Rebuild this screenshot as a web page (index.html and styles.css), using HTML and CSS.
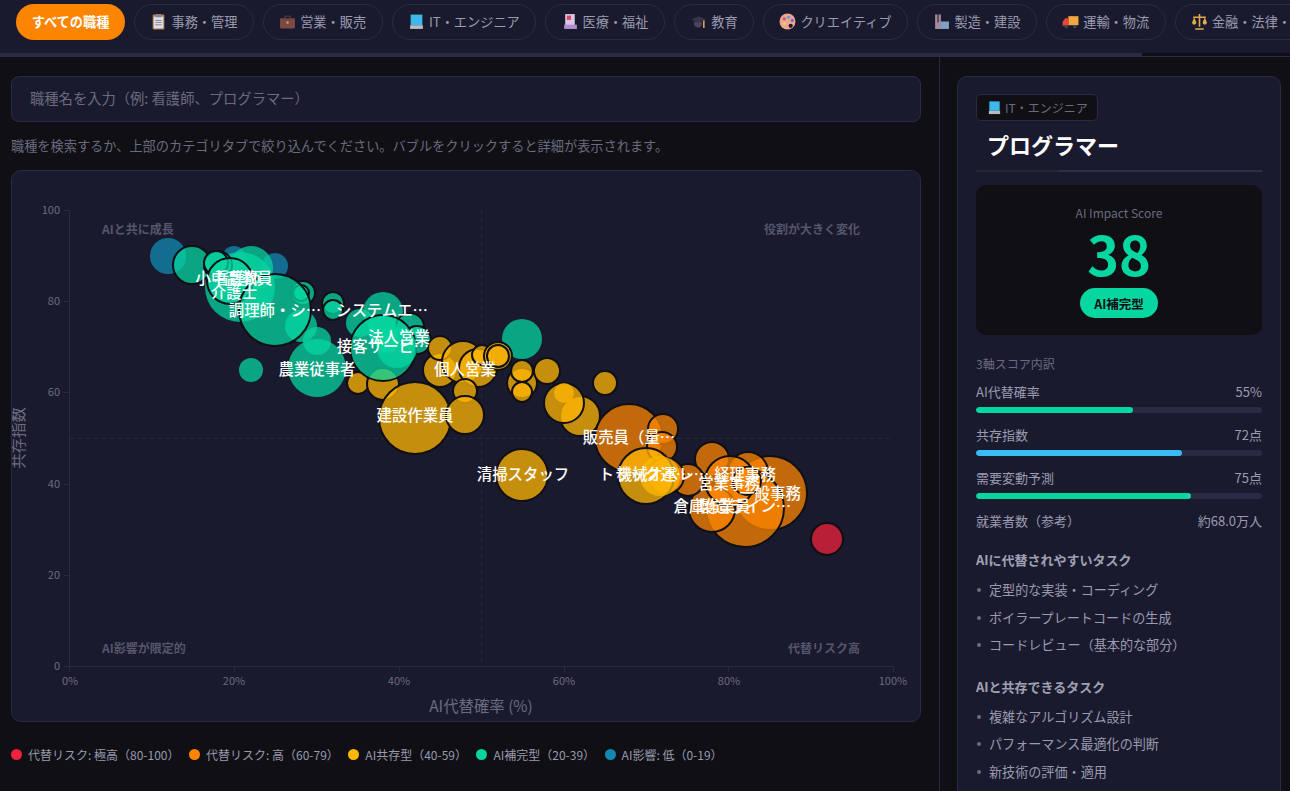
FILE: index.html
```html
<!DOCTYPE html>
<html lang="ja">
<head>
<meta charset="utf-8">
<title>AI Impact</title>
<link rel="stylesheet" href="styles.css">
</head>
<body>
<nav class="tabs">
  <div class="tab tab-active">すべての職種</div>
  <div class="tab"><svg class="ico" viewBox="0 0 16 16"><rect x="2.500" y="1.500" width="11" height="14" rx="1" fill="#b87f4c"/><rect x="3.500" y="3.500" width="9" height="11" fill="#dcdde6"/><rect x="5.500" y="1" width="5" height="3" fill="#858594"/><path d="M5 7h6M5 9h6M5 11h6" stroke="#8d8d9c" stroke-width="1"/></svg>事務・管理</div>
  <div class="tab"><svg class="ico" viewBox="0 0 16 16"><rect x="1" y="5" width="14" height="9.500" rx="1" fill="#7c4a42"/><rect x="5.500" y="3" width="5" height="2.500" fill="none" stroke="#5f3a36"/><rect x="7" y="8" width="2" height="2" fill="#d89f76"/></svg>営業・販売</div>
  <div class="tab"><svg class="ico" viewBox="0 0 16 16"><rect x="2.500" y="1.500" width="11" height="10" fill="#3db8ea"/><rect x="2" y="11.500" width="12" height="3.500" fill="#b5bac4"/></svg>IT・エンジニア</div>
  <div class="tab"><svg class="ico" viewBox="0 0 16 16"><rect x="3" y="1" width="9" height="13.500" fill="#d9c5e6"/><rect x="4.500" y="2.500" width="4" height="4" fill="#d9466a"/><rect x="2" y="11" width="12" height="4" fill="#b38cd0"/></svg>医療・福祉</div>
  <div class="tab"><svg class="ico" viewBox="0 0 16 16"><path d="M1 6l7-3 7 3-7 3z" fill="#3b3548"/><path d="M4 8v4l4 2 3-2V8l-3 1z" fill="#4d4560"/><path d="M13 7v7" stroke="#f0a860" stroke-width="1.400"/></svg>教育</div>
  <div class="tab"><svg class="ico" viewBox="0 0 16 16"><circle cx="8" cy="8" r="7.500" fill="#eea68f"/><circle cx="5" cy="5.500" r="1.500" fill="#e04a6f"/><circle cx="9" cy="4" r="1.500" fill="#4aa8e0"/><circle cx="12.500" cy="7" r="1.500" fill="#8a5fd0"/><circle cx="5" cy="10" r="1.500" fill="#e8d060"/><circle cx="11" cy="12" r="2" fill="#1a1a2e"/></svg>クリエイティブ</div>
  <div class="tab"><svg class="ico" viewBox="0 0 16 16"><path d="M2 15V1.500h2.200V9h1V1.500h2.200V15z" fill="#a88a9a"/><rect x="7" y="8" width="8" height="7" fill="#7fa3c4"/></svg>製造・建設</div>
  <div class="tab"><svg class="ico" viewBox="0 0 16 16"><rect x="6" y="3" width="9.500" height="8.500" fill="#f2a83c"/><path d="M6 5H3L.5 8.500V12H6z" fill="#e2483f"/><circle cx="4" cy="13" r="1.600" fill="#445"/><circle cx="12" cy="13" r="1.600" fill="#445"/></svg>運輸・物流</div>
  <div class="tab"><svg class="ico" viewBox="0 0 16 16"><path d="M8 1v12M2 4h12M4 15h8" stroke="#e3a94e" stroke-width="1.500" fill="none"/><path d="M1 9l2-5 2 5a2 2 0 0 1-4 0zM11 9l2-5 2 5a2 2 0 0 1-4 0z" fill="#e3a94e"/></svg>金融・法律・公務</div>
</nav>
<div class="scrollbar"><div class="scroll-thumb"></div></div>
<main class="layout">
  <section class="left">
    <div class="search">職種名を入力（例: 看護師、プログラマー）</div>
    <p class="hint">職種を検索するか、上部のカテゴリタブで絞り込んでください。バブルをクリックすると詳細が表示されます。</p>
    <div class="chart">
      <svg class="plot" viewBox="0 0 908 550" width="908" height="550">
        <g class="grid">
          <path d="M57.500 495.500H881.500"/>
          <path d="M57.500 39.500V495.500"/>
          <path d="M52 39.500h5M52 130.500h5M52 221.500h5M52 313.500h5M52 404.500h5M52 495.500h5M57.500 496v5M222.500 496v5M387.500 496v5M552.500 496v5M716.500 496v5M881.500 496v5"/>
          <path class="mid" d="M57.500 267.500H881.500M469.500 39.500V495.500"/>
        </g>
        <g class="axis-y">
          <text x="48" y="43">100</text><text x="48" y="134">80</text><text x="48" y="225">60</text><text x="48" y="317">40</text><text x="48" y="408">20</text><text x="48" y="499">0</text>
        </g>
        <g class="axis-x">
          <text x="58" y="514">0%</text><text x="222" y="514">20%</text><text x="387" y="514">40%</text><text x="552" y="514">60%</text><text x="717" y="514">80%</text><text x="881" y="514">100%</text>
        </g>
        <text class="axis-title" x="469" y="541">AI代替確率 (%)</text>
        <text class="axis-title" transform="translate(12 267) rotate(-90)">共存指数</text>
        <g class="quad">
          <text x="90" y="63">AIと共に成長</text>
          <text x="848" y="63" class="end">役割が大きく変化</text>
          <text x="90" y="482">AI影響が限定的</text>
          <text x="848" y="482" class="end">代替リスク高</text>
        </g>
        <g class="canvas">
          <g class="bubbles blue soft">
            <circle cx="157" cy="85" r="18"/><circle cx="223" cy="87" r="12"/><circle cx="264" cy="95" r="13"/>
          </g>
          <g class="bubbles teal soft">
            <circle cx="229" cy="116" r="35"/><circle cx="240" cy="97" r="22"/><circle cx="290" cy="155" r="16"/><circle cx="306" cy="170" r="14"/><circle cx="306" cy="197" r="29"/><circle cx="240" cy="199" r="12"/><circle cx="511" cy="168" r="20"/><circle cx="372" cy="141" r="20"/><circle cx="349" cy="152" r="14"/>
          </g>
          <g class="bubbles teal">
            <circle cx="181" cy="94" r="19"/><circle cx="207" cy="94" r="14"/><circle cx="205" cy="92" r="12"/><circle cx="219" cy="110" r="23"/><circle cx="292" cy="122" r="12"/><circle cx="290" cy="122" r="8"/><circle cx="264" cy="139" r="36"/><circle cx="322" cy="132" r="11"/><circle cx="322" cy="139" r="10"/><circle cx="399" cy="156" r="14"/><circle cx="406" cy="169" r="14"/>
          </g>
          <g class="bubbles amber">
            <circle cx="347" cy="212" r="11"/><circle cx="372" cy="213" r="16"/><circle cx="404" cy="247" r="36"/><circle cx="429" cy="199" r="17"/><circle cx="429" cy="177" r="12"/><circle cx="452" cy="191" r="21"/><circle cx="467" cy="197" r="19"/><circle cx="454" cy="220" r="12"/><circle cx="454" cy="244" r="19"/><circle cx="471" cy="184" r="10"/><circle cx="487" cy="185" r="14"/><circle cx="487" cy="185" r="11"/><circle cx="511" cy="212" r="15"/><circle cx="511" cy="200" r="11"/><circle cx="511" cy="221" r="10"/><circle cx="536" cy="200" r="13"/><circle cx="594" cy="212" r="12"/><circle cx="569" cy="245" r="20"/><circle cx="553" cy="232" r="20"/><circle cx="511" cy="304" r="26"/>
          </g>
          <g class="bubbles amber soft"><circle cx="553" cy="222" r="10"/></g>
          <g class="bubbles orange">
            <circle cx="618" cy="267" r="34"/><circle cx="652" cy="258" r="15"/><circle cx="651" cy="276" r="15"/><circle cx="701" cy="288" r="17"/><circle cx="759" cy="322" r="37"/><circle cx="737" cy="301" r="20"/><circle cx="734" cy="337" r="39"/><circle cx="701" cy="338" r="23"/><circle cx="719" cy="310" r="25"/><circle cx="736" cy="310" r="14"/><circle cx="677" cy="309" r="16"/><circle cx="655" cy="305" r="18"/>
          </g>
          <g class="bubbles amber"><circle cx="635" cy="305" r="28"/></g>
          <g class="bubbles amber soft"><circle cx="649" cy="305" r="20"/></g>
          <g class="bubbles teal"><circle cx="372" cy="177" r="33"/></g>
          <g class="bubbles teal soft"><circle cx="386" cy="177" r="20"/><circle cx="376" cy="170" r="12"/><circle cx="372" cy="160" r="15"/></g>
          <g class="bubbles red"><circle cx="816" cy="368" r="16"/></g>
        </g>
        <g class="labels">
          <text x="223" y="112">小中高教員</text><text x="226" y="112">看護師</text><text x="223" y="126">介護士</text><text x="264" y="144">調理師・シ…</text><text x="371" y="144">システムエ…</text><text x="388" y="171">法人営業</text><text x="372" y="180">接客サービ…</text><text x="306" y="203">農業従事者</text><text x="454" y="203">個人営業</text><text x="404" y="249">建設作業員</text><text x="618" y="271">販売員（量…</text><text x="512" y="308">清掃スタッフ</text><text x="634" y="308">トラック運…</text><text x="652" y="308">機械オペレ…</text><text x="734" y="308">経理事務</text><text x="718" y="317">営業事務</text><text x="759" y="327">一般事務</text><text x="701" y="340">倉庫作業員</text><text x="734" y="340">製造ライン…</text>
        </g>
      </svg>
    </div>
    <ul class="legend">
      <li><i class="dot dot-red"></i>代替リスク: 極高（80-100）</li>
      <li><i class="dot dot-orange"></i>代替リスク: 高（60-79）</li>
      <li><i class="dot dot-amber"></i>AI共存型（40-59）</li>
      <li><i class="dot dot-teal"></i>AI補完型（20-39）</li>
      <li><i class="dot dot-blue"></i>AI影響: 低（0-19）</li>
    </ul>
  </section>
  <aside class="right">
    <div class="card">
      <div class="badge"><svg class="ico ico-small" viewBox="0 0 16 16"><rect x="2.500" y="1.500" width="11" height="10" fill="#3db8ea"/><rect x="2" y="11.500" width="12" height="3.500" fill="#b5bac4"/></svg>IT・エンジニア</div>
      <h2 class="job">プログラマー</h2>
      <div class="score">
        <div class="score-label">AI Impact Score</div>
        <div class="score-num">38</div>
        <div class="pill">AI補完型</div>
      </div>
      <div class="sub">3軸スコア内訳</div>
      <div class="row"><span>AI代替確率</span><span>55%</span></div>
      <div class="bar"><div class="fill fill-teal" style="width:55%"></div></div>
      <div class="row"><span>共存指数</span><span>72点</span></div>
      <div class="bar"><div class="fill fill-sky" style="width:72%"></div></div>
      <div class="row"><span>需要変動予測</span><span>75点</span></div>
      <div class="bar"><div class="fill fill-teal" style="width:75%"></div></div>
      <div class="row row-plain"><span>就業者数（参考）</span><span>約68.0万人</span></div>
      <h3 class="task-head task-head-first">AIに代替されやすいタスク</h3>
      <ul class="tasks">
        <li>定型的な実装・コーディング</li>
        <li>ボイラープレートコードの生成</li>
        <li>コードレビュー（基本的な部分）</li>
      </ul>
      <h3 class="task-head">AIと共存できるタスク</h3>
      <ul class="tasks">
        <li>複雑なアルゴリズム設計</li>
        <li>パフォーマンス最適化の判断</li>
        <li>新技術の評価・適用</li>
      </ul>
    </div>
  </aside>
</main>
</body>
</html>
```
FILE: styles.css
```css
* { box-sizing: border-box; }
html, body { margin: 0; height: 100%; overflow: hidden; }
body {
  background: #0f0f14;
  color: #e0e0e8;
  font-family: "Noto Sans CJK JP", "Noto Sans", sans-serif;
  display: flex;
  flex-direction: column;
}
.tabs {
  display: flex;
  gap: 9px;
  height: 53px;
  padding: 4px 16px 0;
  background: #1a1a2e;
  overflow: hidden;
  flex: none;
}
.tab {
  flex: none;
  height: 36px;
  display: flex;
  align-items: center;
  gap: 4px;
  padding: 0 15.400px 2px;
  border: 1px solid #2a2a45;
  border-radius: 18px;
  font-size: 13.200px;
  color: #9a9ab0;
  white-space: nowrap;
}
.tab-active {
  background: #fb8500;
  border: 0;
  padding: 0 15.700px 2px;
  color: #fff;
  font-weight: 700;
}
.ico { width: 17px; height: 17px; flex: none; }
.ico-small { width: 15px; height: 15px; }
.scrollbar { height: 4px; background: #0f0f14; border-bottom: 1px solid #2a2a45; flex: none; }
.scroll-thumb { width: 1142px; height: 4px; background: #2a2a45; }
.layout { flex: 1; display: flex; min-height: 0; overflow: hidden; }
.left {
  width: 940px;
  flex: none;
  padding: 19px 18px 0 11px;
  border-right: 1px solid #2a2a45;
}
.search {
  height: 46px;
  display: flex;
  align-items: center;
  padding: 0 18px 3px;
  background: #1a1a2e;
  border: 1px solid #2a2a45;
  border-radius: 8px;
  font-size: 14.300px;
  color: #6b6b80;
}
.hint { margin: 14px 0; font-size: 13.200px; line-height: 20px; color: #6b6b80; }
.chart {
  height: 552px;
  background: #1a1a2e;
  border: 1px solid #2a2a45;
  border-radius: 10px;
  overflow: hidden;
}
.plot { display: block; }
.grid path { stroke: #2a2a45; fill: none; stroke-width: 1; }
.grid .mid { stroke-dasharray: 4 4; stroke: #26263f; }
.axis-y text { fill: #6b6b80; font-size: 11px; text-anchor: end; }
.axis-x text { fill: #6b6b80; font-size: 11px; text-anchor: middle; }
.axis-title { fill: #6b6b80; font-size: 15.400px; text-anchor: middle; }
.quad text { fill: #55556b; font-size: 12px; font-weight: 700; }
.quad .end { text-anchor: end; }
.canvas { transform: translateX(-1px); }
.bubbles circle { fill-opacity: .75; stroke: #0f0f14; stroke-width: 2; }
.soft circle { stroke: none; }
.blue circle { fill: #118ab2; }
.teal circle { fill: #06d6a0; }
.amber circle { fill: #ffb703; }
.orange circle { fill: #fb8500; }
.red circle { fill: #ef233c; }
.labels { transform: translate(-1px, .5px); }
.labels text { fill: #fff; font-size: 15.400px; font-weight: 500; text-anchor: middle; }
.legend {
  list-style: none;
  margin: 24px 0 0;
  padding: 0;
  display: flex;
  gap: 9.500px;
  font-size: 12px;
  color: #9a9ab0;
}
.legend li { display: flex; align-items: center; gap: 6px; }
.dot { width: 11px; height: 11px; border-radius: 50%; }
.dot-red { background: #ef233c; }
.dot-orange { background: #fb8500; }
.dot-amber { background: #ffb703; }
.dot-teal { background: #06d6a0; }
.dot-blue { background: #118ab2; }
.right { flex: 1; padding: 19px 9px 0 17px; min-width: 0; }
.card {
  background: #1a1a2e;
  border: 1px solid #2a2a45;
  border-radius: 10px;
  padding: 17px 18px 60px;
}
.badge {
  display: inline-flex;
  align-items: center;
  gap: 3px;
  height: 27px;
  padding: 0 9px 1px 10px;
  background: #0f0f14;
  border: 1px solid #2a2a45;
  border-radius: 5px;
  font-size: 12px;
  color: #6b6b80;
  vertical-align: top;
}
.job {
  margin: 0;
  padding: 7px 11px 10px;
  font-size: 22px;
  line-height: 32px;
  font-weight: 700;
  color: #fff;
  border-bottom: 2px solid #2a2a45;
  border-image: linear-gradient(90deg, #26262e 29%, #2e2e48 29%) 1;
}
.score {
  margin-top: 13px;
  height: 150px;
  background: #0f0f14;
  border-radius: 10px;
  display: flex;
  flex-direction: column;
  align-items: center;
  padding-top: 19px;
}
.score-label { font-size: 12px; line-height: 18px; color: #6b6b80; }
.score-num { font-size: 54px; line-height: 62px; font-weight: 700; color: #06d6a0; }
.pill {
  margin-top: 4px;
  height: 30px;
  padding: 0 14px;
  display: flex;
  align-items: center;
  background: #06d6a0;
  color: #0f0f14;
  border-radius: 15px;
  font-size: 12.500px;
  font-weight: 700;
}
.sub { margin: 20px 0 9px; font-size: 12px; line-height: 18px; color: #6b6b80; }
.row {
  display: flex;
  justify-content: space-between;
  margin-bottom: 6px;
  font-size: 13px;
  line-height: 19px;
  color: #9a9ab0;
}
.row-plain { margin: 13px 0 0; }
.bar { height: 6px; margin-bottom: 12px; background: #2a2a45; border-radius: 3px; overflow: hidden; }
.bar + .row-plain { margin-top: 2px; }
.fill { height: 100%; border-radius: 3px; }
.fill-teal { background: #06d6a0; }
.fill-sky { background: #38bdf8; }
.task-head { margin: 18px 0 0; font-size: 13px; line-height: 20px; font-weight: 700; color: #a0a0b4; }
.task-head-first { margin-top: 20px; }
.tasks { list-style: none; margin: 6px 0 0; padding: 0; }
.tasks li { position: relative; padding-left: 13px; font-size: 13.100px; line-height: 27.500px; color: #9a9ab0; }
.tasks li::before { content: ""; position: absolute; left: 1px; top: 12px; width: 4px; height: 4px; border-radius: 50%; background: #6b6b80; }
```
